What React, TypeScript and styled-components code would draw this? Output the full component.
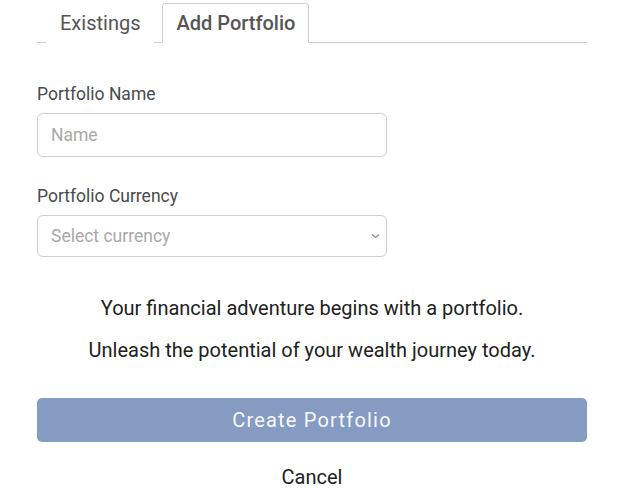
import styled, { createGlobalStyle } from 'styled-components';

const GlobalStyle = createGlobalStyle`
  body {
    margin: 0;
    background: #fff;
    font-family: Roboto, "Liberation Sans", sans-serif;
    color: #212529;
  }
`;

const Page = styled.div`
  width: 550px;
  margin-left: 37px;
  padding-top: 3px;
`;

const TabList = styled.div`
  display: flex;
  gap: 8px;
  padding-left: 9px;
  border-bottom: 1px solid #d0d0d0;
`;

const Tab = styled.div<{ $active?: boolean }>`
  height: 38px;
  display: flex;
  align-items: center;
  padding: 0 13px;
  margin-bottom: -1px;
  font-size: 20px;
  font-weight: ${(p) => (p.$active ? 500 : 400)};
  color: #555;
  border: 1px solid ${(p) => (p.$active ? '#d0d0d0' : 'transparent')};
  border-bottom-color: ${(p) => (p.$active ? '#fff' : 'transparent')};
  border-radius: 4px 4px 0 0;
  background: #fff;
`;

const Form = styled.div`
  display: flex;
  flex-direction: column;
  padding-top: 40px;
`;

const Field = styled.div`
  display: flex;
  flex-direction: column;
  gap: 8px;
  margin-bottom: 28px;
`;

const Label = styled.label`
  font-size: 17.5px;
  color: #4a4a4a;
  line-height: 22px;
`;

const Input = styled.input`
  box-sizing: border-box;
  width: 350px;
  height: 44px;
  padding: 0 13px;
  border: 1px solid #cfcfcf;
  border-radius: 6px;
  font-family: inherit;
  font-size: 17.5px;
  color: #333;
  outline: none;
  &::placeholder {
    color: #a9a9a9;
  }
`;

const Select = styled.div`
  box-sizing: border-box;
  width: 350px;
  height: 42px;
  padding: 0 6px 0 13px;
  border: 1px solid #cfcfcf;
  border-radius: 6px;
  display: flex;
  align-items: center;
  justify-content: space-between;
  font-size: 17.5px;
  color: #a9a9a9;
`;

const Message = styled.div`
  margin-top: 11px;
  display: flex;
  flex-direction: column;
  align-items: center;
  gap: 18px;
  font-size: 20px;
  line-height: 24px;
  color: #212121;
`;

const Button = styled.button`
  margin-top: 36px;
  width: 550px;
  height: 44px;
  border: none;
  border-radius: 5px;
  background: #869bc1;
  color: #f6f8fb;
  font-family: inherit;
  font-size: 20px;
  letter-spacing: 1.2px;
`;

const Cancel = styled.div`
  margin-top: 23px;
  text-align: center;
  font-size: 20px;
  color: #212121;
`;

export default function App() {
  return (
    <Page>
      <GlobalStyle />
      <TabList>
        <Tab>Existings</Tab>
        <Tab $active>Add Portfolio</Tab>
      </TabList>
      <Form>
        <Field>
          <Label>Portfolio Name</Label>
          <Input placeholder="Name" />
        </Field>
        <Field>
          <Label>Portfolio Currency</Label>
          <Select>
            <span>Select currency</span>
            <svg width="9" height="6" viewBox="0 0 9 6">
              <path d="M1 1.5 L4.5 4.5 L8 1.5" fill="none" stroke="#888" strokeWidth="1.1" />
            </svg>
          </Select>
        </Field>
        <Message>
          <span>Your financial adventure begins with a portfolio.</span>
          <span>Unleash the potential of your wealth journey today.</span>
        </Message>
        <Button>Create Portfolio</Button>
        <Cancel>Cancel</Cancel>
      </Form>
    </Page>
  );
}
